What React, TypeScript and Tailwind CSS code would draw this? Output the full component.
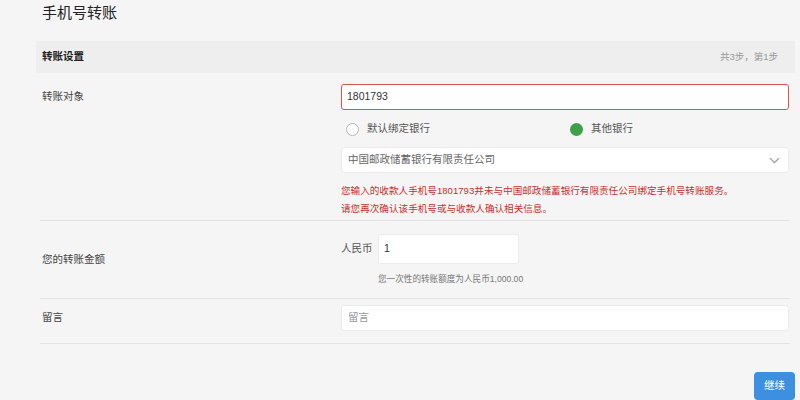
import React from 'react';

const FONT = { fontFamily: '"Liberation Sans", "Noto Sans CJK SC", sans-serif' };

const Radio: React.FC<{ checked?: boolean; label: string }> = ({ checked, label }) => (
    <label className="flex items-center gap-[8px] pl-[5px]">
        {checked ? (
            <span className="w-[13px] h-[13px] rounded-full bg-[#3ea14a]" />
        ) : (
            <span className="w-[13px] h-[13px] rounded-full border border-[#b5b5b5] bg-white" />
        )}
        <span className="text-[10.5px] text-[#555]">{label}</span>
    </label>
);

const App: React.FC = () => {
    return (
        <div className="min-h-screen bg-[#f5f5f5] text-[#333]" style={FONT}>
            <div className="pl-[36px] pr-[5px]">
                {/* Page title */}
                <h1 className="h-[41px] pl-[6px] pt-[2px] text-[15px] leading-[22px] text-[#222]">手机号转账</h1>

                {/* Section header */}
                <div className="h-[32px] bg-[#eeeeee] flex items-center justify-between pl-[6px] pr-[17px]">
                    <span className="text-[10.5px] font-bold text-[#222]">转账设置</span>
                    <span className="text-[9.5px] text-[#999]">共3步，第1步</span>
                </div>

                <div className="ml-[4px] mr-[5px]">
                    {/* Row: 转账对象 */}
                    <div className="flex border-b border-[#e3e3e3] pt-[11px] pb-[2px]">
                        <div className="w-[301px] pl-[2px] h-[26px] flex items-center text-[10.5px] text-[#444]">
                            转账对象
                        </div>
                        <div className="flex-1 mr-[1px]">
                            <div className="h-[26px] bg-white border border-[#d9534f] rounded-[3px] flex items-center px-[5px] text-[10.5px] text-[#333]">
                                1801793
                            </div>
                            <div className="mt-[7px] h-[24px] grid grid-cols-2 items-center">
                                <Radio label="默认绑定银行" />
                                <Radio checked label="其他银行" />
                            </div>
                            <div className="mt-[6px] h-[26px] bg-white border border-[#ececec] rounded-[3px] flex items-center justify-between pl-[6px] pr-[8px]">
                                <span className="text-[10.5px] text-[#666]">中国邮政储蓄银行有限责任公司</span>
                                <svg width="11" height="7" viewBox="0 0 11 7" fill="none">
                                    <path d="M1 1.2 L5.5 5.5 L10 1.2" stroke="#a5a5a5" strokeWidth="1.3" />
                                </svg>
                            </div>
                            <div className="mt-[9px] text-[9.6px] leading-[18px] text-[#c9302c]">
                                <p>您输入的收款人手机号1801793并未与中国邮政储蓄银行有限责任公司绑定手机号转账服务。</p>
                                <p>请您再次确认该手机号或与收款人确认相关信息。</p>
                            </div>
                        </div>
                    </div>

                    {/* Row: 您的转账金额 */}
                    <div className="flex items-center border-b border-[#e3e3e3] pt-[13px] pb-[12px]">
                        <div className="w-[301px] pl-[2px] text-[10.5px] text-[#444]">您的转账金额</div>
                        <div className="flex-1">
                            <div className="flex items-center">
                                <span className="w-[37px] text-[10.5px] text-[#555]">人民币</span>
                                <div className="w-[141px] h-[30px] bg-white border border-[#ececec] rounded-[3px] flex items-center px-[5px] text-[10.5px] text-[#333]">
                                    1
                                </div>
                            </div>
                            <div className="ml-[37px] mt-[8px] text-[8.6px] leading-[14px] text-[#777]">
                                您一次性的转账额度为人民币1,000.00
                            </div>
                        </div>
                    </div>

                    {/* Row: 留言 */}
                    <div className="flex items-center border-b border-[#e3e3e3] pt-[6px] pb-[12px]">
                        <div className="w-[301px] pl-[2px] text-[10.5px] text-[#444]">留言</div>
                        <div className="flex-1 mr-[1px]">
                            <div className="h-[26px] bg-white border border-[#ececec] rounded-[3px] flex items-center px-[6px] text-[10.5px] text-[#999]">
                                留言
                            </div>
                        </div>
                    </div>
                </div>

                {/* Footer */}
                <div className="flex justify-end mt-[28px]">
                    <button className="w-[41px] h-[28px] rounded-[4px] bg-[#3d8fe0] text-white text-[10.5px]">继续</button>
                </div>
            </div>
        </div>
    );
};

export default App;
